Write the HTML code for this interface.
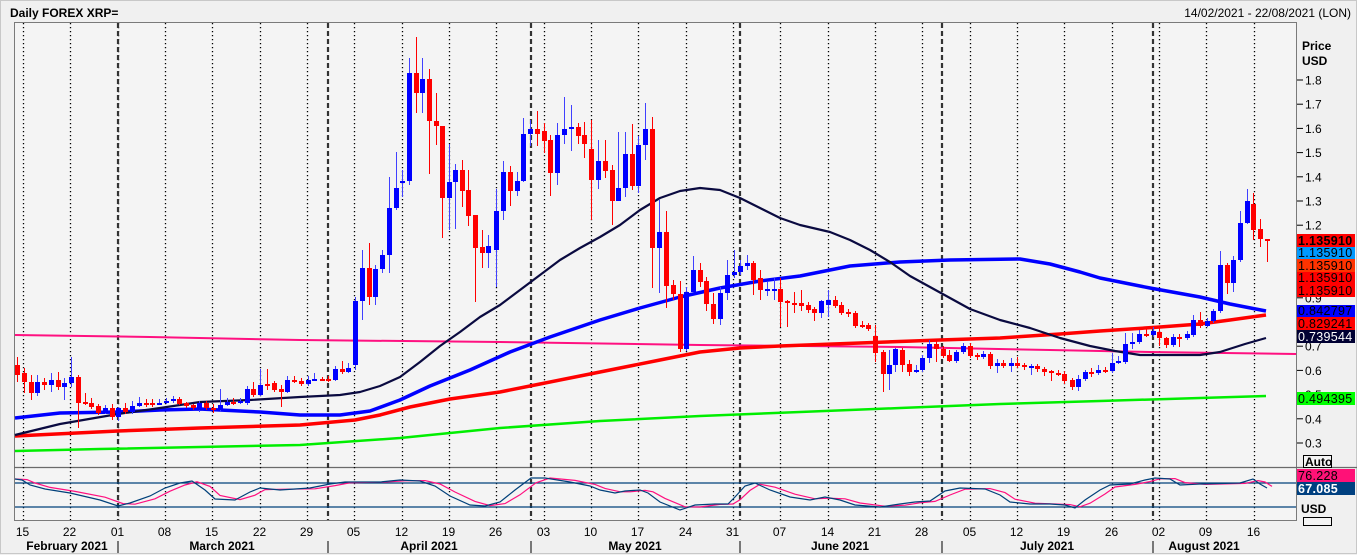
<!DOCTYPE html>
<html><head><meta charset="utf-8">
<style>
html,body{margin:0;padding:0;background:#f0f0f0;}
body{width:1357px;height:555px;overflow:hidden;position:relative;font-family:"Liberation Sans",Tahoma,sans-serif;}
svg{position:absolute;left:0;top:0;}
</style></head>
<body>
<svg id="s" width="1357" height="555" viewBox="0 0 1357 555" xmlns="http://www.w3.org/2000/svg" font-family="Liberation Sans, sans-serif">
<rect x="0" y="0" width="1357" height="555" fill="#f0f0f0"/>
<rect x="0.5" y="0.5" width="1356" height="553" fill="none" stroke="#c8c8c8"/>
<rect x="14.5" y="22.5" width="1282" height="498" fill="#f4f4f4" stroke="#7a7a7a"/>
<line x1="14" y1="467.5" x2="1357" y2="467.5" stroke="#6a6a6a" stroke-width="1.2"/>
<text x="10" y="17" font-size="12" font-weight="bold" fill="#000">Daily FOREX XRP=</text>
<text x="1351" y="17" font-size="12" fill="#000" text-anchor="end">14/02/2021 - 22/08/2021 (LON)</text>
<g id="grid"></g>
<g id="ma"></g>
<g id="candles"></g>
<g id="osc"></g>
<g id="axis"></g>
<g id="labels"></g>
</svg>
<script>
var NS="http://www.w3.org/2000/svg";
function el(p,t,a,txt){var e=document.createElementNS(NS,t);for(var k in a)e.setAttribute(k,a[k]);if(txt!==undefined)e.textContent=txt;document.getElementById(p).appendChild(e);return e;}
var days=["15","22","01","08","15","22","29","05","12","19","26","03","10","17","24","31","07","14","21","28","05","12","19","26","02","09","16"];
for(var k=0;k<27;k++){var x=Math.round(23+k*47.33)+0.5;
 el("grid","line",{x1:x,y1:23,x2:x,y2:520,stroke:"#000","stroke-width":1.3,"stroke-dasharray":"1.3,2.7"});
 el("axis","text",{x:x-1,y:536,"font-size":"12","text-anchor":"middle",fill:"#000"},days[k]);}
var months=[118,328,531,740,942,1153];
months.forEach(function(x){el("grid","line",{x1:x,y1:23,x2:x,y2:520,stroke:"#333","stroke-width":2.2,"stroke-dasharray":"5,3"});
 el("axis","line",{x1:x,y1:541,x2:x,y2:553,stroke:"#000","stroke-width":1});});
var mn=[["February 2021",67],["March 2021",222],["April 2021",429],["May 2021",635],["June 2021",840],["July 2021",1047],["August 2021",1204]];
mn.forEach(function(m){el("axis","text",{x:m[1],y:550,"font-size":"12","font-weight":"bold","text-anchor":"middle",fill:"#000"},m[0]);});
for(var i=0;i<16;i++){var p=1.8-i*0.1;var y=80+i*24.2;
 el("axis","line",{x1:1297,y1:y,x2:1303,y2:y,stroke:"#000"});
 el("axis","text",{x:1305,y:y+4.5,"font-size":"12",fill:"#000"},p.toFixed(1));}
el("axis","text",{x:1302,y:50,"font-size":"12","font-weight":"bold",fill:"#000"},"Price");
el("axis","text",{x:1302,y:65,"font-size":"12","font-weight":"bold",fill:"#000"},"USD");
function pl(pts,c,w){el("ma","polyline",{points:pts.map(function(p){return p.join(",")}).join(" "),fill:"none",stroke:c,"stroke-width":w,"stroke-linejoin":"round"});}
pl([[15,451],[100,449],[300,445],[400,438],[500,428],[600,421],[700,416],[800,412],[900,408],[1000,404],[1100,401],[1200,398],[1266,396]],"#00ee00",2.5);
pl([[15,335],[150,337],[300,340],[500,342],[700,345],[900,347],[1050,350],[1150,352],[1296,354]],"#ff1080",2);
pl([[15,436],[118,431],[200,428],[300,425],[355,420],[380,415],[410,407],[450,399],[500,392],[540,384],[580,376],[620,368],[660,360],[700,352],[740,348],[780,346],[860,343],[940,340],[1000,338],[1060,334],[1100,331],[1160,327],[1200,324],[1230,320],[1266,315]],"#ff0000",3.5);
pl([[15,418],[60,413],[118,412],[160,410],[200,409],[260,412],[300,415],[340,415],[370,411],[400,400],[430,386],[470,370],[510,352],[550,337],[600,320],[640,308],[680,297],[720,288],[760,281],[800,276],[850,266],[900,262],[950,260],[1020,259],[1050,264],[1080,272],[1100,278],[1150,288],[1200,297],[1230,304],[1266,311]],"#0000ff",3.5);
pl([[15,435],[60,424],[118,414],[160,408],[200,402],[250,400],[300,397],[340,395],[360,392],[380,386],[400,377],[420,362],[440,346],[460,332],[480,317],[500,305],[520,290],[540,275],[560,260],[580,248],[600,237],[620,225],[640,210],[660,198],[680,191],[700,188],[720,190],[740,198],[760,208],[780,218],[800,225],[830,232],[850,240],[870,250],[890,262],[910,276],[930,287],[950,298],[970,309],[1000,320],[1030,328],[1060,338],[1090,346],[1115,351],[1140,355],[1200,355],[1220,352],[1245,344],[1266,338]],"#0a0a40",2.2);
var C=[[17,365,375,357,382],[24,373,382,368,393],[31,382,393,375,400],[37,393,382,375,396],[44,382,385,378,390],[51,385,380,373,392],[58,380,387,372,390],[64,387,383,378,400],[71,383,377,357,387],[78,377,403,375,428],[85,402,403,393,405],[91,403,407,398,409],[98,406,413,404,415],[105,413,408,405,414],[112,408,417,404,420],[118,417,408,407,421],[125,408,412,403,414],[132,412,406,401,414],[139,406,403,397,407],[146,403,405,399,407],[152,403,404,399,407],[159,404,403,399,405],[166,403,401,398,404],[173,401,399,396,403],[179,399,404,397,405],[186,403,406,402,408],[193,405,408,404,410],[199,410,403,401,412],[206,403,408,401,410],[213,408,408,404,413],[220,410,405,389,412],[227,405,402,398,406],[233,402,402,398,405],[240,402,401,398,404],[247,403,389,386,405],[253,389,395,382,397],[260,395,385,369,396],[267,384,384,369,390],[274,383,390,381,392],[281,389,392,385,407],[287,392,380,376,393],[294,380,382,376,383],[301,381,384,378,386],[308,384,380,376,386],[314,380,379,373,381],[322,379,379,377,381],[328,379,380,376,382],[335,380,369,366,381],[342,369,372,361,374],[348,372,368,363,373],
[355,365,301,297,370],[362,301,268,250,320],[369,268,297,243,305],[375,297,269,265,305],[382,269,255,250,273],[389,255,208,177,273],[396,208,188,152,210],[402,183,181,170,197],[409,181,73,58,185],[416,73,93,37,113],[422,93,79,58,113],[429,79,121,69,174],[436,121,126,93,145],[442,126,198,126,238],[449,198,182,144,230],[455,182,170,164,229],[462,170,191,160,207],[468,190,216,170,226],[475,215,248,215,302],[482,247,253,230,268],[488,253,246,235,268],[496,250,211,189,287],[503,211,172,161,220],[510,172,191,166,206],[517,191,181,172,196],[523,181,134,118,182],[530,134,129,120,146],[537,129,134,111,146],[544,131,141,123,153],[550,140,173,135,196],[557,173,135,123,185],[564,135,129,97,144],[571,129,127,105,151],[578,127,136,123,144],[584,135,144,122,158],[591,149,180,120,220],[598,180,161,140,189],[605,161,171,140,178],[612,170,201,165,225],[618,201,188,132,200],[625,188,154,132,197],[632,154,186,124,190],[638,186,145,136,193],[645,145,129,103,160],[652,129,248,117,288],[659,248,232,200,293],[666,232,286,211,308],[673,285,294,280,300],[680,294,349,281,352],[686,349,292,287,351],[693,292,270,256,291],[700,270,282,263,287],[706,281,304,277,311],[713,304,319,293,324],[720,319,293,287,325],[727,293,275,260,300],[734,275,272,250,278],[740,272,266,260,275],[747,266,263,255,270],[753,263,280,261,295],[760,278,290,270,300],[767,290,289,282,296],
[774,290,289,278,300],[780,289,302,278,327],[787,301,303,300,327],[794,303,303,292,313],[801,303,306,290,311],[808,305,310,302,313],[814,309,313,307,321],[821,313,301,300,318],[828,305,300,290,317],[835,300,306,296,308],[841,305,313,302,315],[848,312,313,309,317],[855,313,326,311,328],[862,325,325,321,328],[868,325,329,323,331],[875,336,353,325,362],[883,352,374,350,392],[889,374,365,350,390],[895,365,349,348,372],[902,350,365,348,372],[909,364,372,360,376],[916,372,370,365,373],[922,370,358,355,372],[929,358,344,340,363],[936,344,349,340,362],[943,349,356,346,358],[949,355,361,350,362],[956,361,352,350,363],[963,352,346,343,354],[970,346,356,343,358],[977,355,357,353,360],[983,357,354,351,359],[990,354,366,352,369],[997,366,363,359,373],[1003,363,366,360,368],[1011,366,363,358,372],[1017,363,366,357,368],[1024,365,367,363,370],[1031,367,366,364,375],[1037,366,369,364,372],[1044,369,372,367,376],[1051,371,373,370,381],[1058,373,373,370,376],[1064,374,381,371,384],[1072,380,387,378,390],[1078,387,379,375,391],[1085,379,372,370,381],[1091,372,374,368,377],[1098,373,370,365,375],[1105,370,371,367,373],[1112,371,363,353,373],[1118,363,361,356,364],[1125,362,344,333,364],[1132,344,342,333,349],[1139,342,334,330,344],[1146,334,335,328,337],[1153,335,331,327,337],[1159,332,338,328,346],[1166,338,345,337,348],[1173,345,337,334,347],[1179,337,338,334,347],[1187,338,334,331,340],[1193,335,320,315,337],[1200,320,326,312,328],[1207,326,321,318,327],[1213,321,311,309,323],[1220,311,265,251,313],[1227,265,283,263,294],[1233,283,260,256,292],[1240,260,223,211,262],[1247,223,201,189,224],[1253,204,230,193,240],[1260,229,239,219,247],[1267,239,240,239,262]];
C.forEach(function(c){var up=c[2]<c[1];var col=up?"#0000ff":"#ff0000";var wc=up?"#4040ff":"#ff0000";
 el("candles","line",{x1:c[0]+0.5,y1:c[3],x2:c[0]+0.5,y2:c[4],stroke:wc,"stroke-width":1});
 var t=Math.min(c[1],c[2]),h=Math.max(Math.abs(c[2]-c[1]),2);
 el("candles","rect",{x:c[0]-2,y:t,width:5,height:h,fill:col});});
el("osc","line",{x1:15,y1:483,x2:1296,y2:483,stroke:"#00407a","stroke-width":1.2});
el("osc","line",{x1:15,y1:507,x2:1296,y2:507,stroke:"#00407a","stroke-width":1.2});
var N=[[15,479],[22,480],[30,485],[45,489],[70,493],[100,500],[118,506],[130,503],[150,496],[165,488],[180,483],[192,481],[205,490],[215,499],[235,500],[250,492],[260,488],[280,490],[310,488],[330,484],[345,482],[380,482],[400,480],[420,481],[435,486],[450,496],[470,505],[485,506],[500,502],[515,490],[531,478],[545,478],[570,482],[590,486],[600,490],[615,493],[625,491],[640,490],[648,493],[660,502],[680,510],[695,505],[715,504],[728,504],[735,497],[745,486],[755,483],[770,490],[790,497],[810,500],[825,497],[840,500],[855,505],[880,507],[900,504],[915,502],[930,501],[945,491],[960,488],[985,489],[1000,495],[1010,502],[1030,504],[1050,504],[1065,505],[1075,508],[1085,500],[1100,490],[1110,485],[1130,484],[1145,480],[1155,478],[1170,479],[1180,485],[1200,484],[1240,483],[1253,479],[1260,484],[1267,488]];
var P=N.map(function(p,i){var q=N[Math.max(0,i-1)];return [p[0]+(i==0?0:5),(p[1]*0.6+q[1]*0.4)];});
function op(pts,c){el("osc","polyline",{points:pts.map(function(p){return p.join(",")}).join(" "),fill:"none",stroke:c,"stroke-width":1.2});}
op(P,"#ff1080");op(N,"#00407a");
function lab(y,h,bg,fg,t,b){el("labels","rect",{x:1297,y:y,width:58,height:h,fill:bg});
 el("labels","text",{x:1298,y:y+h-2,"font-size":"12.5","letter-spacing":"0.3","font-weight":b?"bold":"normal",fill:fg},t);}
lab(234,13,"#ff0000","#000","1.135910",1);
lab(247,12,"#0099ff","#000","1.135910");
lab(259,13,"#ff3300","#000","1.135910");
lab(272,12,"#ff0000","#000","1.135910");
lab(284,13,"#ff0000","#000","1.135910");
lab(305,12,"#0000ff","#000","0.842797");
lab(317,13,"#ff0000","#000","0.829241");
lab(330,13,"#000033","#fff","0.739544");
lab(392,13,"#00ff00","#000","0.494395");
lab(469,13,"#ff1177","#000","76.228");
lab(482,13,"#004080","#fff","67.085",1);
el("labels","rect",{x:1303.5,y:455.5,width:28,height:12,fill:"#f4f4f4",stroke:"#000"});
el("labels","text",{x:1305,y:466,"font-size":"12","font-weight":"bold",fill:"#000"},"Auto");
el("labels","text",{x:1301,y:513,"font-size":"12","font-weight":"bold",fill:"#000"},"USD");
el("labels","rect",{x:1303.5,y:517.5,width:28,height:8,fill:"#f4f4f4",stroke:"#000"});
</script>
</body></html>
